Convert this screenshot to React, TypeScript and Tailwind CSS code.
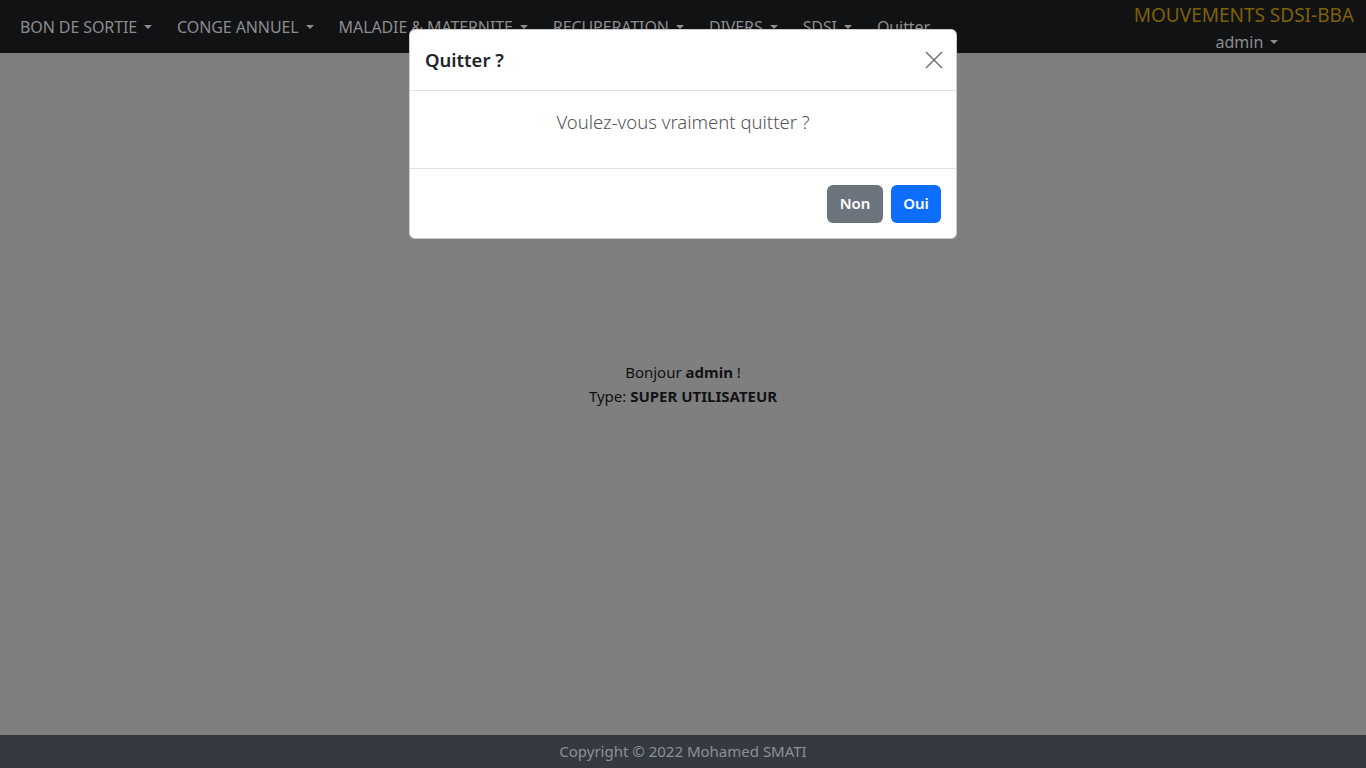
import { X } from "lucide-react";

const Caret = () => (
  <span className="ml-[7px] inline-block h-0 w-0 border-x-[4px] border-t-[4px] border-x-transparent border-t-current align-middle" />
);

const navItems = [
  { label: "BON DE SORTIE", dropdown: true },
  { label: "CONGE ANNUEL", dropdown: true },
  { label: "MALADIE & MATERNITE", dropdown: true },
  { label: "RECUPERATION", dropdown: true },
  { label: "DIVERS", dropdown: true },
  { label: "SDSI", dropdown: true },
  { label: "Quitter", dropdown: false },
];

export default function App() {
  return (
    <div
      className="relative flex h-[768px] flex-col bg-[#7f7f7f] text-[#101214]"
      style={{ fontFamily: '"Noto Sans", "Open Sans", sans-serif' }}
    >
      <nav className="flex h-[53px] shrink-0 items-center justify-between bg-[#111214] pl-[12px] pr-[12px]">
        <ul className="flex items-center pt-[1px]">
          {navItems.map((item) => (
            <li key={item.label} className="mr-[9px] flex items-center px-[8px] text-[16px] tracking-[-0.1px] text-[#8c8d8f]">
              {item.label}
              {item.dropdown && <Caret />}
            </li>
          ))}
        </ul>
        <div className="flex flex-col items-center pt-[2px] leading-none">
          <span className="text-[19px] text-[#7f6103]">MOUVEMENTS SDSI-BBA</span>
          <span className="mt-[9px] flex items-center pl-[6px] text-[16px] text-[#8c8d8f]">
            admin
            <Caret />
          </span>
        </div>
      </nav>

      <main className="flex flex-1 flex-col items-center justify-center pb-[20px] text-[15px] leading-[24px]">
        <p>
          Bonjour <b className="font-bold">admin</b> !
        </p>
        <p>
          Type: <b className="font-bold">SUPER UTILISATEUR</b>
        </p>
      </main>

      <footer className="z-20 flex h-[33px] shrink-0 items-center justify-center bg-[#343a40] text-[15px] text-[#8e9194]">
        Copyright © 2022 Mohamed SMATI
      </footer>

      <div className="absolute inset-x-0 top-[29px] z-10 flex justify-center">
        <div className="w-[548px] overflow-hidden rounded-[6px] border border-black/20 bg-white">
          <div className="flex h-[61px] items-center justify-between border-b border-[#dee2e6] pl-[15px] pr-[7px]">
            <h5 className="text-[18.5px] font-semibold text-[#212529]">Quitter ?</h5>
            <X className="h-[30px] w-[30px] text-[#777]" strokeWidth={1.3} />
          </div>
          <div className="flex h-[78px] items-center justify-center border-b border-[#dee2e6] pb-[16px] text-[18.5px] font-light text-[#555]">
            Voulez-vous vraiment quitter ?
          </div>
          <div className="flex h-[69px] items-center justify-end gap-[8px] pr-[15px]">
            <button className="h-[38px] w-[56px] rounded-[6px] bg-[#6c757d] text-[15px] font-semibold text-white">
              Non
            </button>
            <button className="h-[38px] w-[50px] rounded-[6px] bg-[#0d6efd] text-[15px] font-semibold text-white">
              Oui
            </button>
          </div>
        </div>
      </div>
    </div>
  );
}
